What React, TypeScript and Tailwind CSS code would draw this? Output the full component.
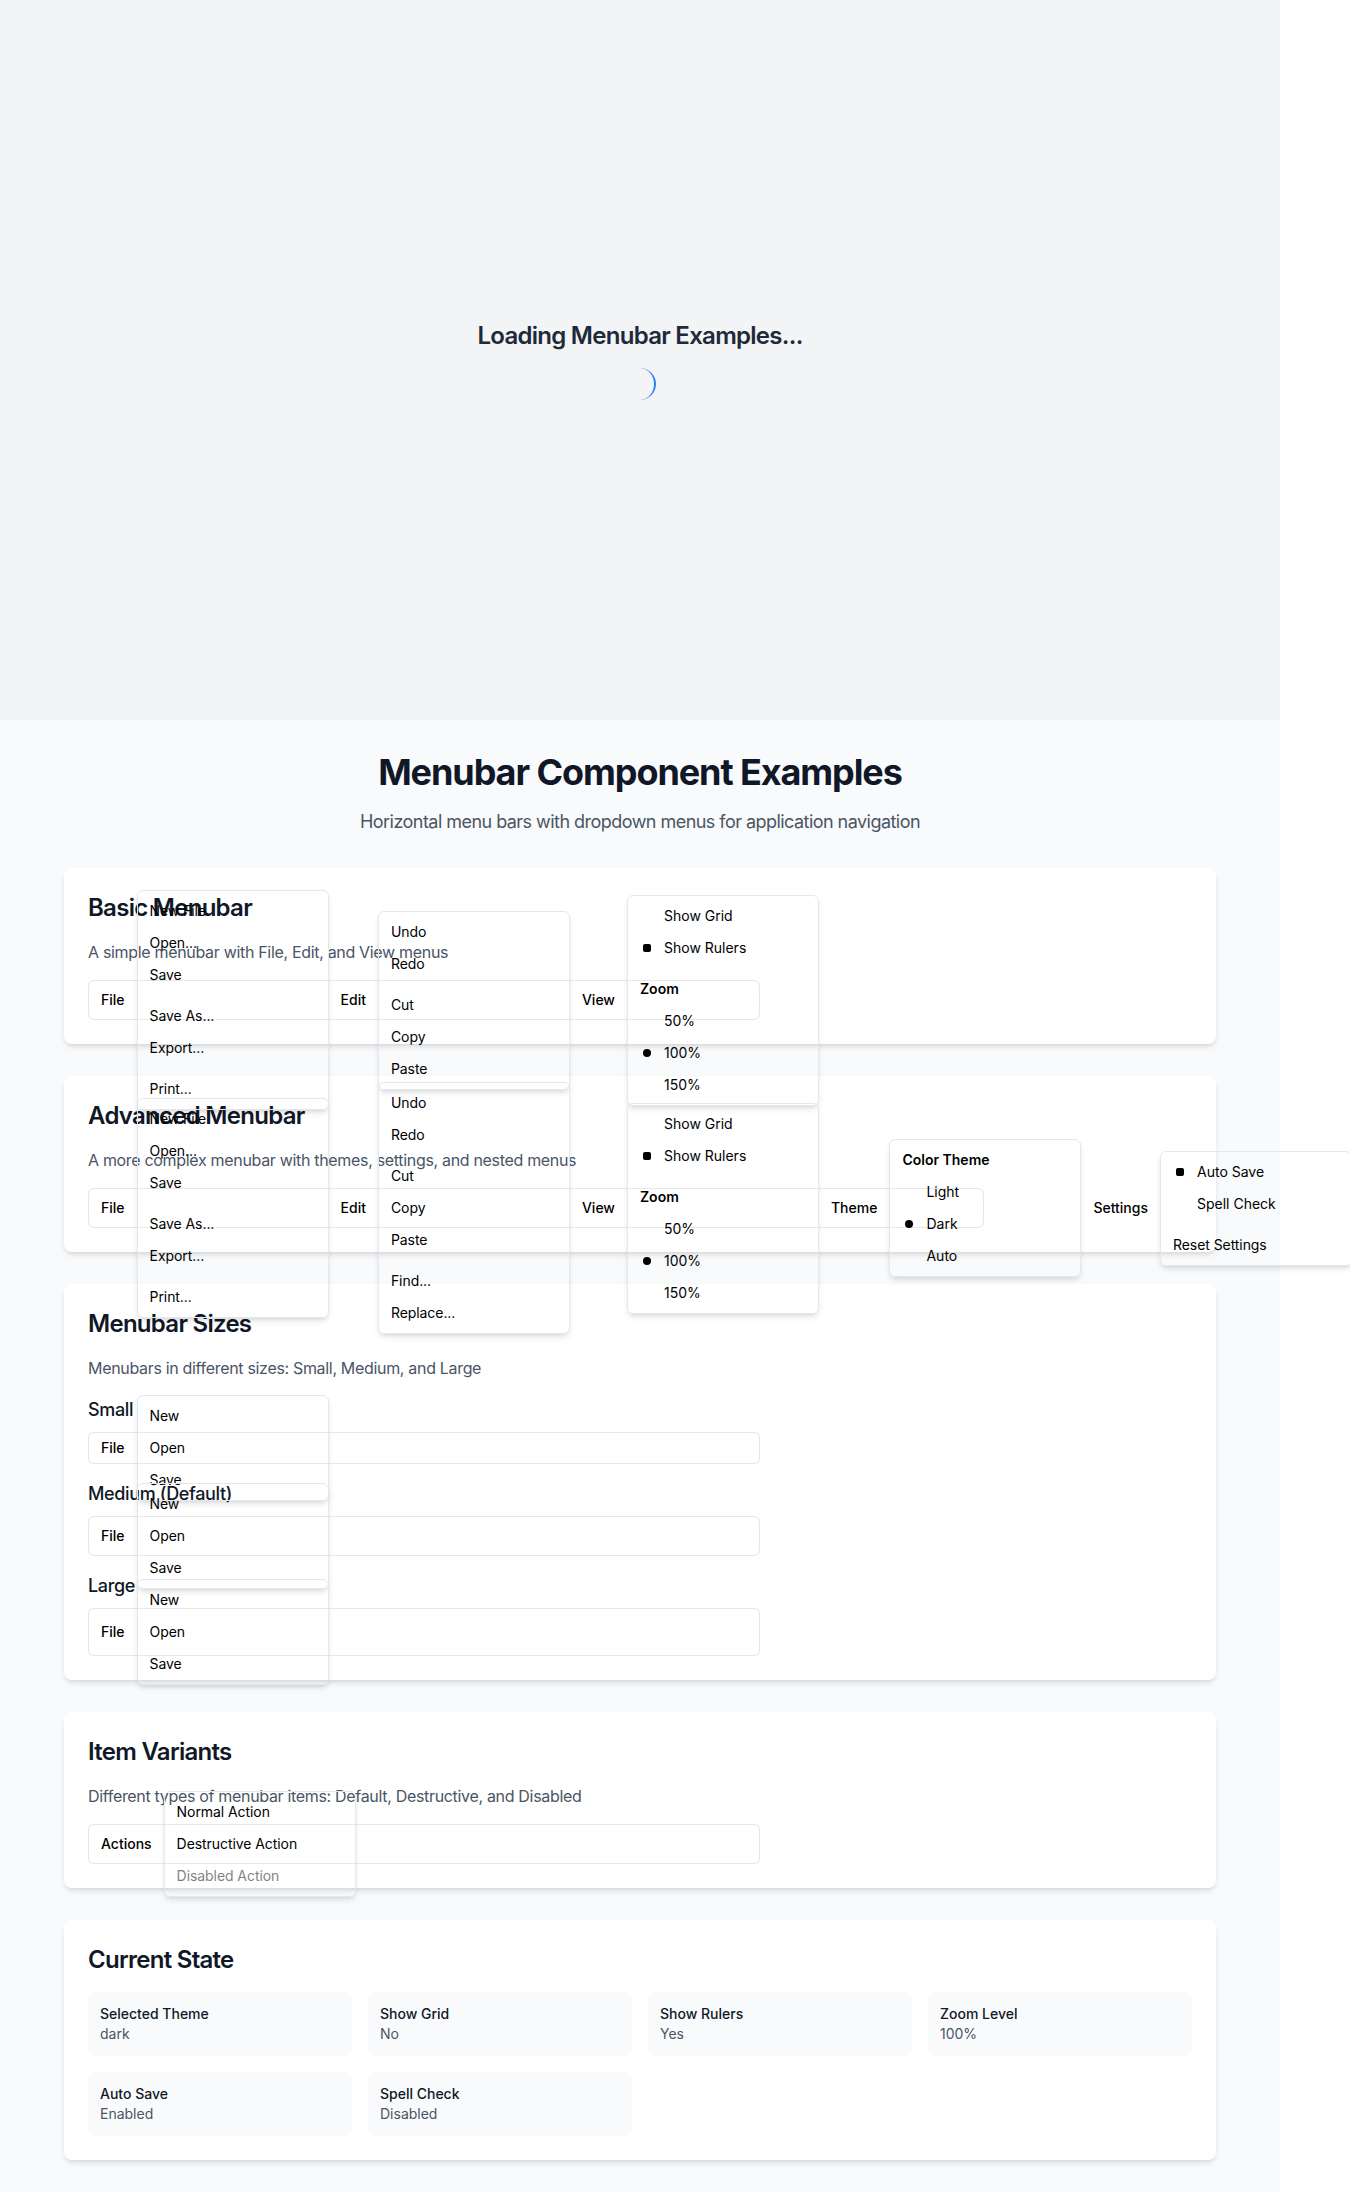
import React from 'react';

type MenuEntry =
    | {kind: 'item'; label: string; disabled?: boolean}
    | {kind: 'sep'}
    | {kind: 'label'; label: string}
    | {kind: 'check'; label: string; checked: boolean}
    | {kind: 'radio'; label: string; checked: boolean};

type Menu = {trigger: string; entries: MenuEntry[]};

const item = (label: string, disabled = false): MenuEntry => ({kind: 'item', label, disabled});
const sep: MenuEntry = {kind: 'sep'};

const fileMenu: Menu = {
    trigger: 'File',
    entries: [
        item('New File'), item('Open...'), item('Save'), sep,
        item('Save As...'), item('Export...'), sep, item('Print...'),
    ],
};

const editBasic: Menu = {
    trigger: 'Edit',
    entries: [item('Undo'), item('Redo'), sep, item('Cut'), item('Copy'), item('Paste')],
};

const editAdvanced: Menu = {
    trigger: 'Edit',
    entries: [
        item('Undo'), item('Redo'), sep, item('Cut'), item('Copy'), item('Paste'), sep,
        item('Find...'), item('Replace...'),
    ],
};

const viewMenu: Menu = {
    trigger: 'View',
    entries: [
        {kind: 'check', label: 'Show Grid', checked: false},
        {kind: 'check', label: 'Show Rulers', checked: true},
        sep,
        {kind: 'label', label: 'Zoom'},
        {kind: 'radio', label: '50%', checked: false},
        {kind: 'radio', label: '100%', checked: true},
        {kind: 'radio', label: '150%', checked: false},
    ],
};

const themeMenu: Menu = {
    trigger: 'Theme',
    entries: [
        {kind: 'label', label: 'Color Theme'},
        {kind: 'radio', label: 'Light', checked: false},
        {kind: 'radio', label: 'Dark', checked: true},
        {kind: 'radio', label: 'Auto', checked: false},
    ],
};

const settingsMenu: Menu = {
    trigger: 'Settings',
    entries: [
        {kind: 'check', label: 'Auto Save', checked: true},
        {kind: 'check', label: 'Spell Check', checked: false},
        sep,
        item('Reset Settings'),
    ],
};

const simpleFile: Menu = {trigger: 'File', entries: [item('New'), item('Open'), item('Save')]};

const actionsMenu: Menu = {
    trigger: 'Actions',
    entries: [item('Normal Action'), item('Destructive Action'), item('Disabled Action', true)],
};

const Entry = ({entry}: {entry: MenuEntry}) => {
    if (entry.kind === 'sep') return <div className="my-1 h-px"/>;
    if (entry.kind === 'label') {
        return <div className="px-2 py-1.5 text-sm leading-5 font-semibold">{entry.label}</div>;
    }
    if (entry.kind === 'check' || entry.kind === 'radio') {
        return (
            <div className="flex items-center rounded-sm px-2 py-1.5 text-sm leading-5">
                <span className="mr-2.5 flex w-3.5 shrink-0 justify-center">
                    {entry.checked && (
                        <span className={entry.kind === 'check'
                            ? 'h-2 w-2 rounded-[2px] bg-black'
                            : 'h-2 w-2 rounded-full bg-black'}/>
                    )}
                </span>
                {entry.label}
            </div>
        );
    }
    return (
        <div className={'flex items-center rounded-sm px-2 py-1.5 text-sm leading-5 tracking-[-0.005em] ' + (entry.disabled ? 'opacity-50' : '')}>
            {entry.label}
        </div>
    );
};

const Menubar = ({menus, height = 'h-10', width = 'max-w-2xl'}: {menus: Menu[]; height?: string; width?: string}) => (
    <div className={`flex w-full items-center rounded-md border border-gray-200 ${height} ${width}`}>
        {menus.map((menu, i) => (
            <React.Fragment key={i}>
                <button className="flex shrink-0 items-center rounded-sm px-3 py-1.5 text-sm leading-5 font-medium text-black">
                    {menu.trigger}
                </button>
                <div className="relative z-50 w-48 shrink-0 rounded-md border border-gray-200 p-1 text-black shadow-md">
                    {menu.entries.map((entry, j) => <Entry key={j} entry={entry}/>)}
                </div>
            </React.Fragment>
        ))}
    </div>
);

const Card = ({title, description, children}: {title: string; description?: string; children: React.ReactNode}) => (
    <div className="rounded-lg bg-white p-6 shadow-md">
        <h2 className="mb-4 text-2xl font-semibold tracking-[-0.03em] text-gray-900">{title}</h2>
        {description && <p className="mb-4 text-base tracking-[-0.02em] text-gray-600">{description}</p>}
        {children}
    </div>
);

const stateItems = [
    {label: 'Selected Theme', value: 'dark'},
    {label: 'Show Grid', value: 'No'},
    {label: 'Show Rulers', value: 'Yes'},
    {label: 'Zoom Level', value: '100%'},
    {label: 'Auto Save', value: 'Enabled'},
    {label: 'Spell Check', value: 'Disabled'},
];

export default function App() {
    return (
        <div className="w-[1280px] font-['Inter',sans-serif]">
            <div className="flex h-[720px] flex-col items-center justify-center bg-gray-100">
                <h2 className="mb-4 text-2xl font-semibold tracking-[-0.03em] text-gray-800">Loading Menubar Examples...</h2>
                <div className="h-8 w-8 rounded-full border-r-2 border-blue-500"/>
            </div>

            <div className="bg-gray-50 py-8">
                <div className="mx-auto max-w-6xl">
                    <div className="mb-8 text-center">
                        <h1 className="mb-4 text-4xl font-bold tracking-[-0.03em] text-gray-900">Menubar Component Examples</h1>
                        <p className="text-lg tracking-[-0.03em] text-gray-600">
                            Horizontal menu bars with dropdown menus for application navigation
                        </p>
                    </div>

                    <div className="space-y-8">
                        <Card title="Basic Menubar" description="A simple menubar with File, Edit, and View menus">
                            <Menubar menus={[fileMenu, editBasic, viewMenu]}/>
                        </Card>

                        <Card title="Advanced Menubar"
                              description="A more complex menubar with themes, settings, and nested menus">
                            <Menubar menus={[fileMenu, editAdvanced, viewMenu, themeMenu, settingsMenu]} width="max-w-4xl"/>
                        </Card>

                        <Card title="Menubar Sizes" description="Menubars in different sizes: Small, Medium, and Large">
                            <div className="space-y-4">
                                <div>
                                    <h3 className="mb-2 text-lg font-medium tracking-[-0.02em] text-gray-900">Small</h3>
                                    <Menubar menus={[simpleFile]} height="h-8"/>
                                </div>
                                <div>
                                    <h3 className="mb-2 text-lg font-medium tracking-[-0.02em] text-gray-900">Medium (Default)</h3>
                                    <Menubar menus={[simpleFile]}/>
                                </div>
                                <div>
                                    <h3 className="mb-2 text-lg font-medium tracking-[-0.02em] text-gray-900">Large</h3>
                                    <Menubar menus={[simpleFile]} height="h-12"/>
                                </div>
                            </div>
                        </Card>

                        <Card title="Item Variants"
                              description="Different types of menubar items: Default, Destructive, and Disabled">
                            <Menubar menus={[actionsMenu]}/>
                        </Card>

                        <Card title="Current State">
                            <div className="grid grid-cols-4 gap-4">
                                {stateItems.map((s) => (
                                    <div key={s.label} className="rounded-lg bg-gray-50 p-3">
                                        <div className="text-sm font-medium text-gray-900">{s.label}</div>
                                        <div className="text-sm text-gray-600">{s.value}</div>
                                    </div>
                                ))}
                            </div>
                        </Card>
                    </div>
                </div>
            </div>
        </div>
    );
}
